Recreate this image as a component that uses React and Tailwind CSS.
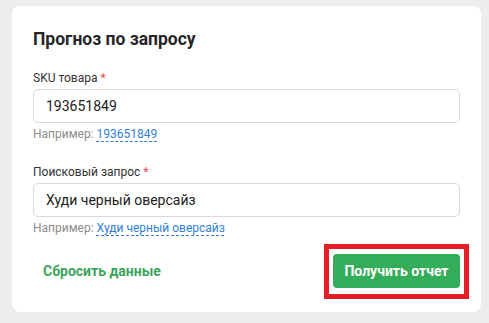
import React, { useState } from 'react'

// Прогноз по запросу – form card

const Field = ({ label, value, onChange, example }) => (
  <div className="flex flex-col">
    <label className="text-[12px] leading-4 text-[#333]">
      {label} <span className="text-[#e5484d]">*</span>
    </label>
    <input
      value={value}
      onChange={e => onChange(e.target.value)}
      className="mt-[3px] h-[34px] w-full rounded-[5px] border border-[#d9d9d9] bg-white px-3 text-[14px] text-[#222] outline-none"
    />
    <div className="mt-[3px] text-[12px] leading-4 text-[#8c8c8c]">
      Например:{' '}
      <span
        onClick={() => onChange(example)}
        className="cursor-pointer text-[#2f7fd8] underline decoration-dashed decoration-[#2f7fd8] underline-offset-[3px]"
      >
        {example}
      </span>
    </div>
  </div>
)

export default function App() {
  const [sku, setSku] = useState('193651849')
  const [query, setQuery] = useState('Худи черный оверсайз')

  return (
    <div className="min-h-screen bg-[#ededed] pl-[12px] pt-[6px] font-['Roboto',sans-serif]">
      <div className="w-[469px] rounded-[8px] bg-white px-[21px] pb-[24px] pt-[21px]">
        <h2 className="text-[17.5px] font-bold leading-6 text-[#262626]">Прогноз по запросу</h2>

        <div className="mt-[19px]">
          <Field label="SKU товара" value={sku} onChange={setSku} example="193651849" />
        </div>
        <div className="mt-[22px]">
          <Field label="Поисковый запрос" value={query} onChange={setQuery} example="Худи черный оверсайз" />
        </div>

        <div className="mt-[18px] flex items-center justify-between">
          <button
            onClick={() => { setSku(''); setQuery('') }}
            className="h-[34px] px-[10px] text-[14px] font-bold text-[#3ba55c]"
          >
            Сбросить данные
          </button>
          <div className="relative">
            <button className="h-[34px] w-[127px] rounded-[4px] bg-[#34ad5a] text-[14px] font-bold text-white">
              Получить отчет
            </button>
            {/* red highlight frame */}
            <div className="pointer-events-none absolute -bottom-[11px] -left-[9px] -right-[9px] -top-[10px] border-[5px] border-[#e41e26]" />
          </div>
        </div>
      </div>
    </div>
  )
}
